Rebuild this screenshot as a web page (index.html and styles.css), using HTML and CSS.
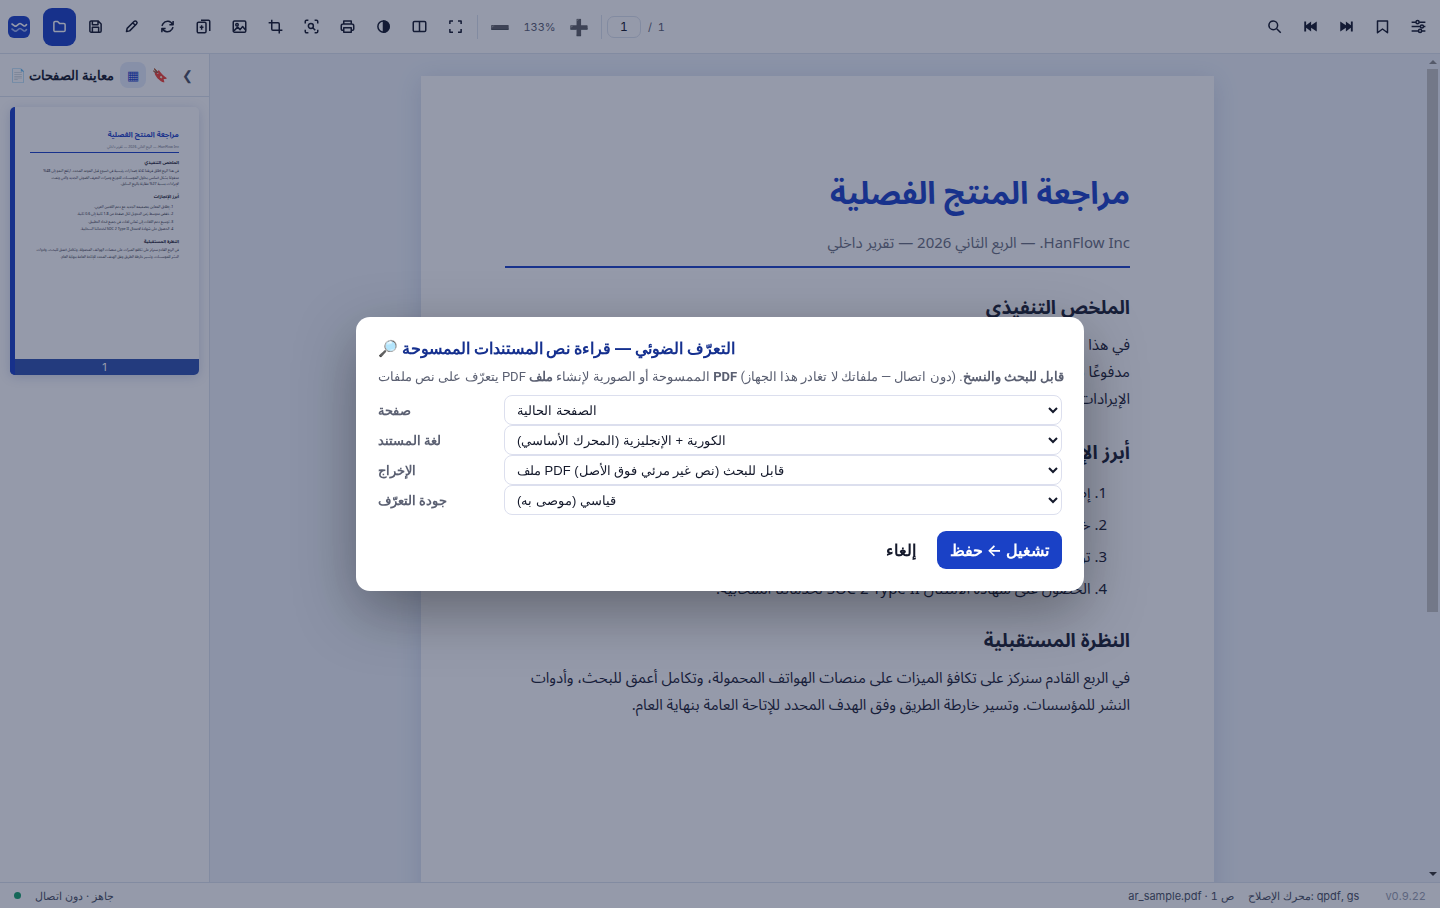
FILE: index.html
```
<!DOCTYPE html>
<html lang="ar">
<head>
  <meta charset="UTF-8" />
  <title>HanFlow PDF</title>
  <link rel="stylesheet" href="styles.css">
</head>
<body>
  <div class="app">
    <!-- Toolbar -->
    <header class="toolbar">
      <svg class="logo" viewBox="0 0 22 22">
        <rect width="22" height="22" rx="6" fill="#1d43c8"/>
        <path d="M4 8l2.500 1.800q1 .7 2 0l2.500-2q1-.7 2 0l2.500 1.800q1 .7 2 0l1-1" fill="none" stroke="#fff" stroke-width="1.600" stroke-linecap="round"/>
        <path d="M4 13l2.500 1.800q1 .7 2 0l2.500-2q1-.7 2 0l2.500 1.800q1 .7 2 0l1-1" fill="none" stroke="#9db4f5" stroke-width="1.600" stroke-linecap="round"/>
      </svg>
      <div class="tools">
        <button class="tool primary" aria-label="فتح"><svg viewBox="0 0 24 24"><path d="M3 6a2 2 0 0 1 2-2h4l3 3h7a2 2 0 0 1 2 2v9a2 2 0 0 1-2 2H5a2 2 0 0 1-2-2z"/></svg></button>
        <button class="tool" aria-label="حفظ"><svg viewBox="0 0 24 24"><path d="M5 3h11l5 5v11a2 2 0 0 1-2 2H5a2 2 0 0 1-2-2V5a2 2 0 0 1 2-2zM7 3v6h9V3M7 21v-8h10v8"/></svg></button>
        <button class="tool" aria-label="تحرير"><svg viewBox="0 0 24 24"><path d="M4 20l1-5L16 4a2.800 2.800 0 0 1 4 4L9 19zM14 6l4 4"/></svg></button>
        <button class="tool" aria-label="تدوير"><svg viewBox="0 0 24 24"><path d="M21 3v6h-6M3 21v-6h6M20 9A8.500 8.500 0 0 0 5 7.500L3 11M4 15a8.500 8.500 0 0 0 15 1.500L21 13"/></svg></button>
        <button class="tool" aria-label="إدراج صفحة"><svg viewBox="0 0 24 24"><rect x="2" y="5" width="14" height="17" rx="2"/><path d="M8 2h12a2 2 0 0 1 2 2v15M9 10v7M6 13h6"/></svg></button>
        <button class="tool" aria-label="صورة"><svg viewBox="0 0 24 24"><rect x="2" y="3" width="20" height="18" rx="2"/><circle cx="8" cy="9" r="2"/><path d="M3 19l6-6 4 4 4-5 5 6"/></svg></button>
        <button class="tool" aria-label="قص"><svg viewBox="0 0 24 24"><path d="M6 1v15a2 2 0 0 0 2 2h15M1 6h15a2 2 0 0 1 2 2v15"/></svg></button>
        <button class="tool" aria-label="التعرف الضوئي"><svg viewBox="0 0 24 24"><path d="M2 7V4a2 2 0 0 1 2-2h3M17 2h3a2 2 0 0 1 2 2v3M22 17v3a2 2 0 0 1-2 2h-3M7 22H4a2 2 0 0 1-2-2v-3M14 14l4 4"/><circle cx="11" cy="11" r="4"/></svg></button>
        <button class="tool" aria-label="طباعة"><svg viewBox="0 0 24 24"><path d="M6 8V3h12v5M6 18H4a2 2 0 0 1-2-2v-5a3 3 0 0 1 3-3h14a3 3 0 0 1 3 3v5a2 2 0 0 1-2 2h-2"/><rect x="6" y="14" width="12" height="7"/></svg></button>
        <button class="tool" aria-label="تباين"><svg viewBox="0 0 24 24"><circle cx="12" cy="12" r="9"/><path d="M12 3a9 9 0 0 1 0 18z" fill="currentColor"/></svg></button>
        <button class="tool" aria-label="صفحتان"><svg viewBox="0 0 24 24"><rect x="2" y="4" width="20" height="16" rx="2"/><path d="M12 4v16"/></svg></button>
        <button class="tool" aria-label="ملء الشاشة"><svg viewBox="0 0 24 24"><path d="M3 8V3h5M16 3h5v5M21 16v5h-5M8 21H3v-5"/></svg></button>
      </div>
      <span class="divider"></span>
      <div class="zoom">
        <button aria-label="تصغير">➖</button>
        <span>133%</span>
        <button aria-label="تكبير">➕</button>
      </div>
      <span class="divider"></span>
      <div class="pager">
        <input type="text" value="1" aria-label="رقم الصفحة">
        <span>/&nbsp; 1</span>
      </div>
      <div class="tools end">
        <button class="tool" aria-label="بحث"><svg viewBox="0 0 24 24"><circle cx="10" cy="10" r="7"/><path d="M15.500 15.500L22 22"/></svg></button>
        <button class="tool solid" aria-label="السابق"><svg viewBox="0 0 24 24"><path d="M2 4h3v6l8-6v6l9-6v16l-9-6v6l-8-6v6H2z"/></svg></button>
        <button class="tool solid" aria-label="التالي"><svg viewBox="0 0 24 24"><path d="M22 4h-3v6l-8-6v6L2 4v16l9-6v6l8-6v6h3z"/></svg></button>
        <button class="tool" aria-label="إشارة مرجعية"><svg viewBox="0 0 24 24"><path d="M4 3h16v19l-8-6-8 6z"/></svg></button>
        <button class="tool" aria-label="إعدادات"><svg viewBox="0 0 24 24"><path d="M1 5h7M13 5h10M1 12h14M20 12h3M1 19h11M17 19h6"/><circle cx="10.500" cy="5" r="2.500"/><circle cx="17.500" cy="12" r="2.500"/><circle cx="14.500" cy="19" r="2.500"/></svg></button>
      </div>
    </header>

    <div class="workspace">
      <!-- Page previews -->
      <aside class="sidebar">
        <div class="sidebar-head">
          <h2>📄 معاينة الصفحات</h2>
          <button class="tab active" aria-label="مصغرات">▦</button>
          <button class="tab" aria-label="إشارات">🔖</button>
          <button class="tab" aria-label="طي">❮</button>
        </div>
        <div class="thumb">
          <div class="thumb-view">
            <div class="doc" dir="rtl">
              <h1>مراجعة المنتج الفصلية</h1>
              <p class="byline">HanFlow Inc. — الربع الثاني 2026 — تقرير داخلي</p>
              <h3>الملخص التنفيذي</h3>
              <p>في هذا الربع أطلق فريقنا ثلاثة إصدارات رئيسية في أسبوع قبل الموعد المحدد. ارتفع النمو إلى 48%<br>مدفوعًا بشكل أساسي بحلول المؤسسات للتوزيع وميزات التعرف الضوئي الجديد والتي ونمت<br>الإيرادات بنسبة 27% مقارنة بالربع السابق.</p>
              <h3>أبرز الإنجازات</h3>
              <ol>
                <li>إطلاق المعاين بتصميمه الجديد مع دعم اللغتين العربي.</li>
                <li>خفض متوسط زمن التحويل لكل صفحة من 1.8 ثانية إلى 0.6 ثانية.</li>
                <li>توسيع دعم اللغات إلى ثماني لغات في جميع أنحاء التطبيق.</li>
                <li>الحصول على شهادة الامتثال SOC 2 Type II لخدماتنا السحابية.</li>
              </ol>
              <h3>النظرة المستقبلية</h3>
              <p>في الربع القادم سنركز على تكافؤ الميزات على منصات الهواتف المحمولة، وتكامل أعمق للبحث، وأدوات النشر للمؤسسات. وتسير خارطة الطريق وفق الهدف المحدد للإتاحة العامة بنهاية العام.</p>
            </div>
          </div>
          <div class="thumb-label">1</div>
        </div>
      </aside>

      <!-- Document -->
      <main class="viewer">
        <div class="doc" dir="rtl">
          <h1>مراجعة المنتج الفصلية</h1>
          <p class="byline">HanFlow Inc. — الربع الثاني 2026 — تقرير داخلي</p>
          <h3>الملخص التنفيذي</h3>
          <p>في هذا الربع أطلق فريقنا ثلاثة إصدارات رئيسية في أسبوع قبل الموعد المحدد. ارتفع النمو إلى 48%<br>مدفوعًا بشكل أساسي بحلول المؤسسات للتوزيع وميزات التعرف الضوئي الجديد والتي ونمت<br>الإيرادات بنسبة 27% مقارنة بالربع السابق.</p>
          <h3>أبرز الإنجازات</h3>
          <ol>
            <li>إطلاق المعاين بتصميمه الجديد مع دعم اللغتين العربي.</li>
            <li>خفض متوسط زمن التحويل لكل صفحة من 1.8 ثانية إلى 0.6 ثانية.</li>
            <li>توسيع دعم اللغات إلى ثماني لغات في جميع أنحاء التطبيق.</li>
            <li>الحصول على شهادة الامتثال SOC 2 Type II لخدماتنا السحابية.</li>
          </ol>
          <h3>النظرة المستقبلية</h3>
          <p>في الربع القادم سنركز على تكافؤ الميزات على منصات الهواتف المحمولة، وتكامل أعمق للبحث، وأدوات النشر للمؤسسات. وتسير خارطة الطريق وفق الهدف المحدد للإتاحة العامة بنهاية العام.</p>
        </div>
      </main>
      <div class="scrollbar">
        <svg viewBox="0 0 8 4"><path d="M0 4l4-4 4 4z" fill="#8b8b8b"/></svg>
        <div class="track"><div class="handle"></div></div>
        <svg viewBox="0 0 8 4"><path d="M0 0l4 4 4-4z" fill="#333"/></svg>
      </div>
    </div>

    <!-- Status bar -->
    <footer class="statusbar">
      <span class="dot"></span>
      <span class="state">جاهز · دون اتصال</span>
      <span>ar_sample.pdf · ص 1</span>
      <span>محرك الإصلاح: qpdf, gs</span>
      <span class="version">v0.9.22</span>
    </footer>
  </div>

  <!-- OCR dialog -->
  <div class="overlay">
    <form class="dialog" role="dialog" aria-labelledby="ocrTitle">
      <h2 id="ocrTitle">🔎 التعرّف الضوئي — قراءة نص المستندات الممسوحة</h2>
      <p class="hint">يتعرّف على نص ملفات PDF الممسوحة أو الصورية لإنشاء <b>ملف PDF قابل للبحث والنسخ</b>. (دون اتصال — ملفاتك لا تغادر هذا الجهاز)</p>
      <div class="row">
        <label for="page">صفحة</label>
        <select id="page"><option>الصفحة الحالية</option></select>
      </div>
      <div class="row">
        <label for="lang">لغة المستند</label>
        <select id="lang"><option>الكورية + الإنجليزية (المحرك الأساسي)</option></select>
      </div>
      <div class="row">
        <label for="output">الإخراج</label>
        <select id="output"><option>ملف PDF قابل للبحث (نص غير مرئي فوق الأصل)</option></select>
      </div>
      <div class="row">
        <label for="quality">جودة التعرّف</label>
        <select id="quality"><option>قياسي (موصى به)</option></select>
      </div>
      <div class="actions">
        <button type="button" class="cancel">إلغاء</button>
        <button type="button" class="run">تشغيل ← حفظ</button>
      </div>
    </form>
  </div>
</body>
</html>
```

FILE: styles.css
```
/* ====== Base ====== */
* {
  box-sizing: border-box;
}
body {
  margin: 0;
  font-family: Inter, "Noto Sans", sans-serif;
  font-size: 13px;
  color: #14192b;
}
button {
  border: none;
  background: none;
  padding: 0;
  font-family: inherit;
  color: inherit;
}
.app {
  display: flex;
  flex-direction: column;
  height: 100vh;
  overflow: hidden;
  background: #eef3fa;
}

/* ====== Toolbar ====== */
.toolbar {
  display: flex;
  align-items: center;
  height: 54px;
  flex: none;
  padding: 0 5px 0 8px;
  background: #fff;
  border-bottom: 1px solid #dde3ee;
  font-variant-numeric: tabular-nums;
}
.logo {
  width: 22px;
  height: 22px;
  margin-right: 13px;
}
.tools {
  display: flex;
  gap: 3px;
}
.tools.end {
  margin-left: auto;
}
.tool {
  display: flex;
  align-items: center;
  justify-content: center;
  width: 33px;
  height: 38px;
  border-radius: 9px;
}
.tool svg {
  width: 15px;
  height: 15px;
  fill: none;
  stroke: currentColor;
  stroke-width: 2.4;
  stroke-linejoin: round;
}
.tool.solid svg {
  fill: currentColor;
  stroke: none;
}
.tool.primary {
  background: #1a41c6;
  color: #fff;
}
.divider {
  width: 1px;
  height: 24px;
  margin: 0 5px;
  background: #dde3ee;
}
.zoom {
  display: flex;
  align-items: center;
  padding: 0 3px;
  font-size: 11px;
  color: #5b6072;
}
.zoom button {
  width: 28px;
  font-size: 16px;
}
.zoom span {
  width: 51px;
  text-align: center;
}
.pager {
  display: flex;
  align-items: center;
  gap: 7px;
  font-size: 11px;
  color: #5b6072;
}
.pager input {
  width: 34px;
  height: 22px;
  border: 1px solid #dde3ee;
  border-radius: 7px;
  background: #fff;
  text-align: center;
  font: 12px Inter, sans-serif;
  font-variant-numeric: tabular-nums;
  color: #14192b;
}

/* ====== Sidebar ====== */
.workspace {
  display: flex;
  flex: 1;
  min-height: 0;
}
.sidebar {
  width: 210px;
  flex: none;
  background: #fff;
  border-right: 1px solid #dde3ee;
}
.sidebar-head {
  display: flex;
  align-items: center;
  gap: 1px;
  height: 43px;
  padding: 0 9px 0 10px;
  border-bottom: 1px solid #dde3ee;
}
.sidebar-head h2 {
  margin: 0 auto 0 0;
  font-size: 13px;
  white-space: nowrap;
}
.tab {
  width: 26px;
  height: 26px;
  border-radius: 8px;
  font-size: 13px;
  color: #4b5163;
}
.tab.active {
  background: #e6edfc;
  color: #1d43c8;
}
.thumb {
  position: relative;
  margin: 10px;
  border-radius: 5px;
  overflow: hidden;
  box-shadow: 0 2px 12px rgba(30,60,140,0.2);
}
/* Selected page marker */
.thumb::before {
  content: "";
  position: absolute;
  inset: 0 auto 0 0;
  width: 5px;
  background: #1a41c6;
}
.thumb-view {
  height: 252px;
  overflow: hidden;
}
.thumb-view .doc {
  zoom: 0.238;
}
.thumb-label {
  height: 16px;
  background: #3052b0;
  color: #fff;
  font-size: 11px;
  line-height: 16px;
  text-align: center;
}

/* ====== Document page ====== */
.viewer {
  flex: 1;
  min-width: 0;
  padding: 22px 20px 0;
  overflow: hidden;
}
.doc {
  max-width: 793px;
  min-height: 1122px;
  margin: 0 auto;
  padding: 92px 84px;
  background: #fff;
  font-family: "Noto Sans", "Noto Sans Arabic", sans-serif;
  font-size: 15px;
  line-height: 27px;
  color: #1b2133;
}
.viewer .doc {
  box-shadow: 0 4px 24px rgba(30,60,140,0.15);
}
.doc h1 {
  margin: 0 0 14px;
  font-size: 31px;
  line-height: 48px;
  color: #1d43c8;
}
.doc .byline {
  margin: 0 0 23px;
  padding-bottom: 12px;
  border-bottom: 2px solid #1d43c8;
  font-size: 15px;
  line-height: 24px;
  color: #6b7080;
}
.doc h3 {
  margin: 0 0 8px;
  font-size: 19px;
  line-height: 32px;
}
.doc p {
  margin: 0 0 24px;
}
.doc ol {
  margin: 0 0 20px;
  padding: 0 23px 0 0;
  list-style-position: inside;
}
.doc li {
  line-height: 32px;
}

/* ====== Scrollbar ====== */
.scrollbar {
  display: flex;
  flex-direction: column;
  align-items: center;
  width: 15px;
  padding: 6px 0;
  gap: 5px;
}
.scrollbar svg {
  width: 8px;
  height: 4px;
}
.track {
  flex: 1;
}
.handle {
  width: 11px;
  height: 68%;
  background: #c1c1c1;
}

/* ====== Status bar ====== */
.statusbar {
  display: flex;
  align-items: center;
  gap: 14px;
  height: 26px;
  flex: none;
  padding: 0 14px;
  background: #fff;
  border-top: 1px solid #dde3ee;
  font-size: 11px;
  font-variant-numeric: tabular-nums;
  color: #4b5163;
}
.dot {
  width: 7px;
  height: 7px;
  border-radius: 50%;
  background: #16a36b;
}
.state {
  margin-right: auto;
}
.version {
  margin-left: 12px;
  color: #9aa0b0;
}

/* ====== Dialog ====== */
.overlay {
  position: fixed;
  inset: 0;
  z-index: 10;
  display: flex;
  align-items: center;
  justify-content: center;
  background: rgba(20,30,66,0.45);
}
.dialog {
  width: 728px;
  max-width: 94vw;
  padding: 21px 22px 22px;
  border-radius: 14px;
  background: #fff;
  box-shadow: 0 20px 60px rgba(0,0,0,0.35);
}
.dialog h2 {
  margin: 0 0 10px;
  font-size: 16px;
  line-height: 20px;
  color: #15308f;
}
.hint {
  margin: 0 0 9px;
  font-family: Roboto, sans-serif;
  font-size: 13px;
  line-height: 18px;
  white-space: nowrap;
  color: #5b6072;
}
.row {
  display: flex;
  align-items: center;
}
.row label {
  width: 126px;
  font-weight: 600;
  color: #5b6072;
}
.row select {
  flex: 1;
  height: 30px;
  padding: 0 8px;
  border: 1px solid #dcdfee;
  border-radius: 8px;
  background: #fff;
  font-family: "Liberation Sans", sans-serif;
  font-size: 13px;
  color: #14192b;
}
.actions {
  display: flex;
  justify-content: flex-end;
  gap: 8px;
  margin-top: 16px;
}
.actions button {
  height: 38px;
  padding: 0 13px;
  border-radius: 9px;
  font-size: 16px;
  font-weight: 600;
}
.actions .run {
  background: #1a41c6;
  color: #fff;
}
```
